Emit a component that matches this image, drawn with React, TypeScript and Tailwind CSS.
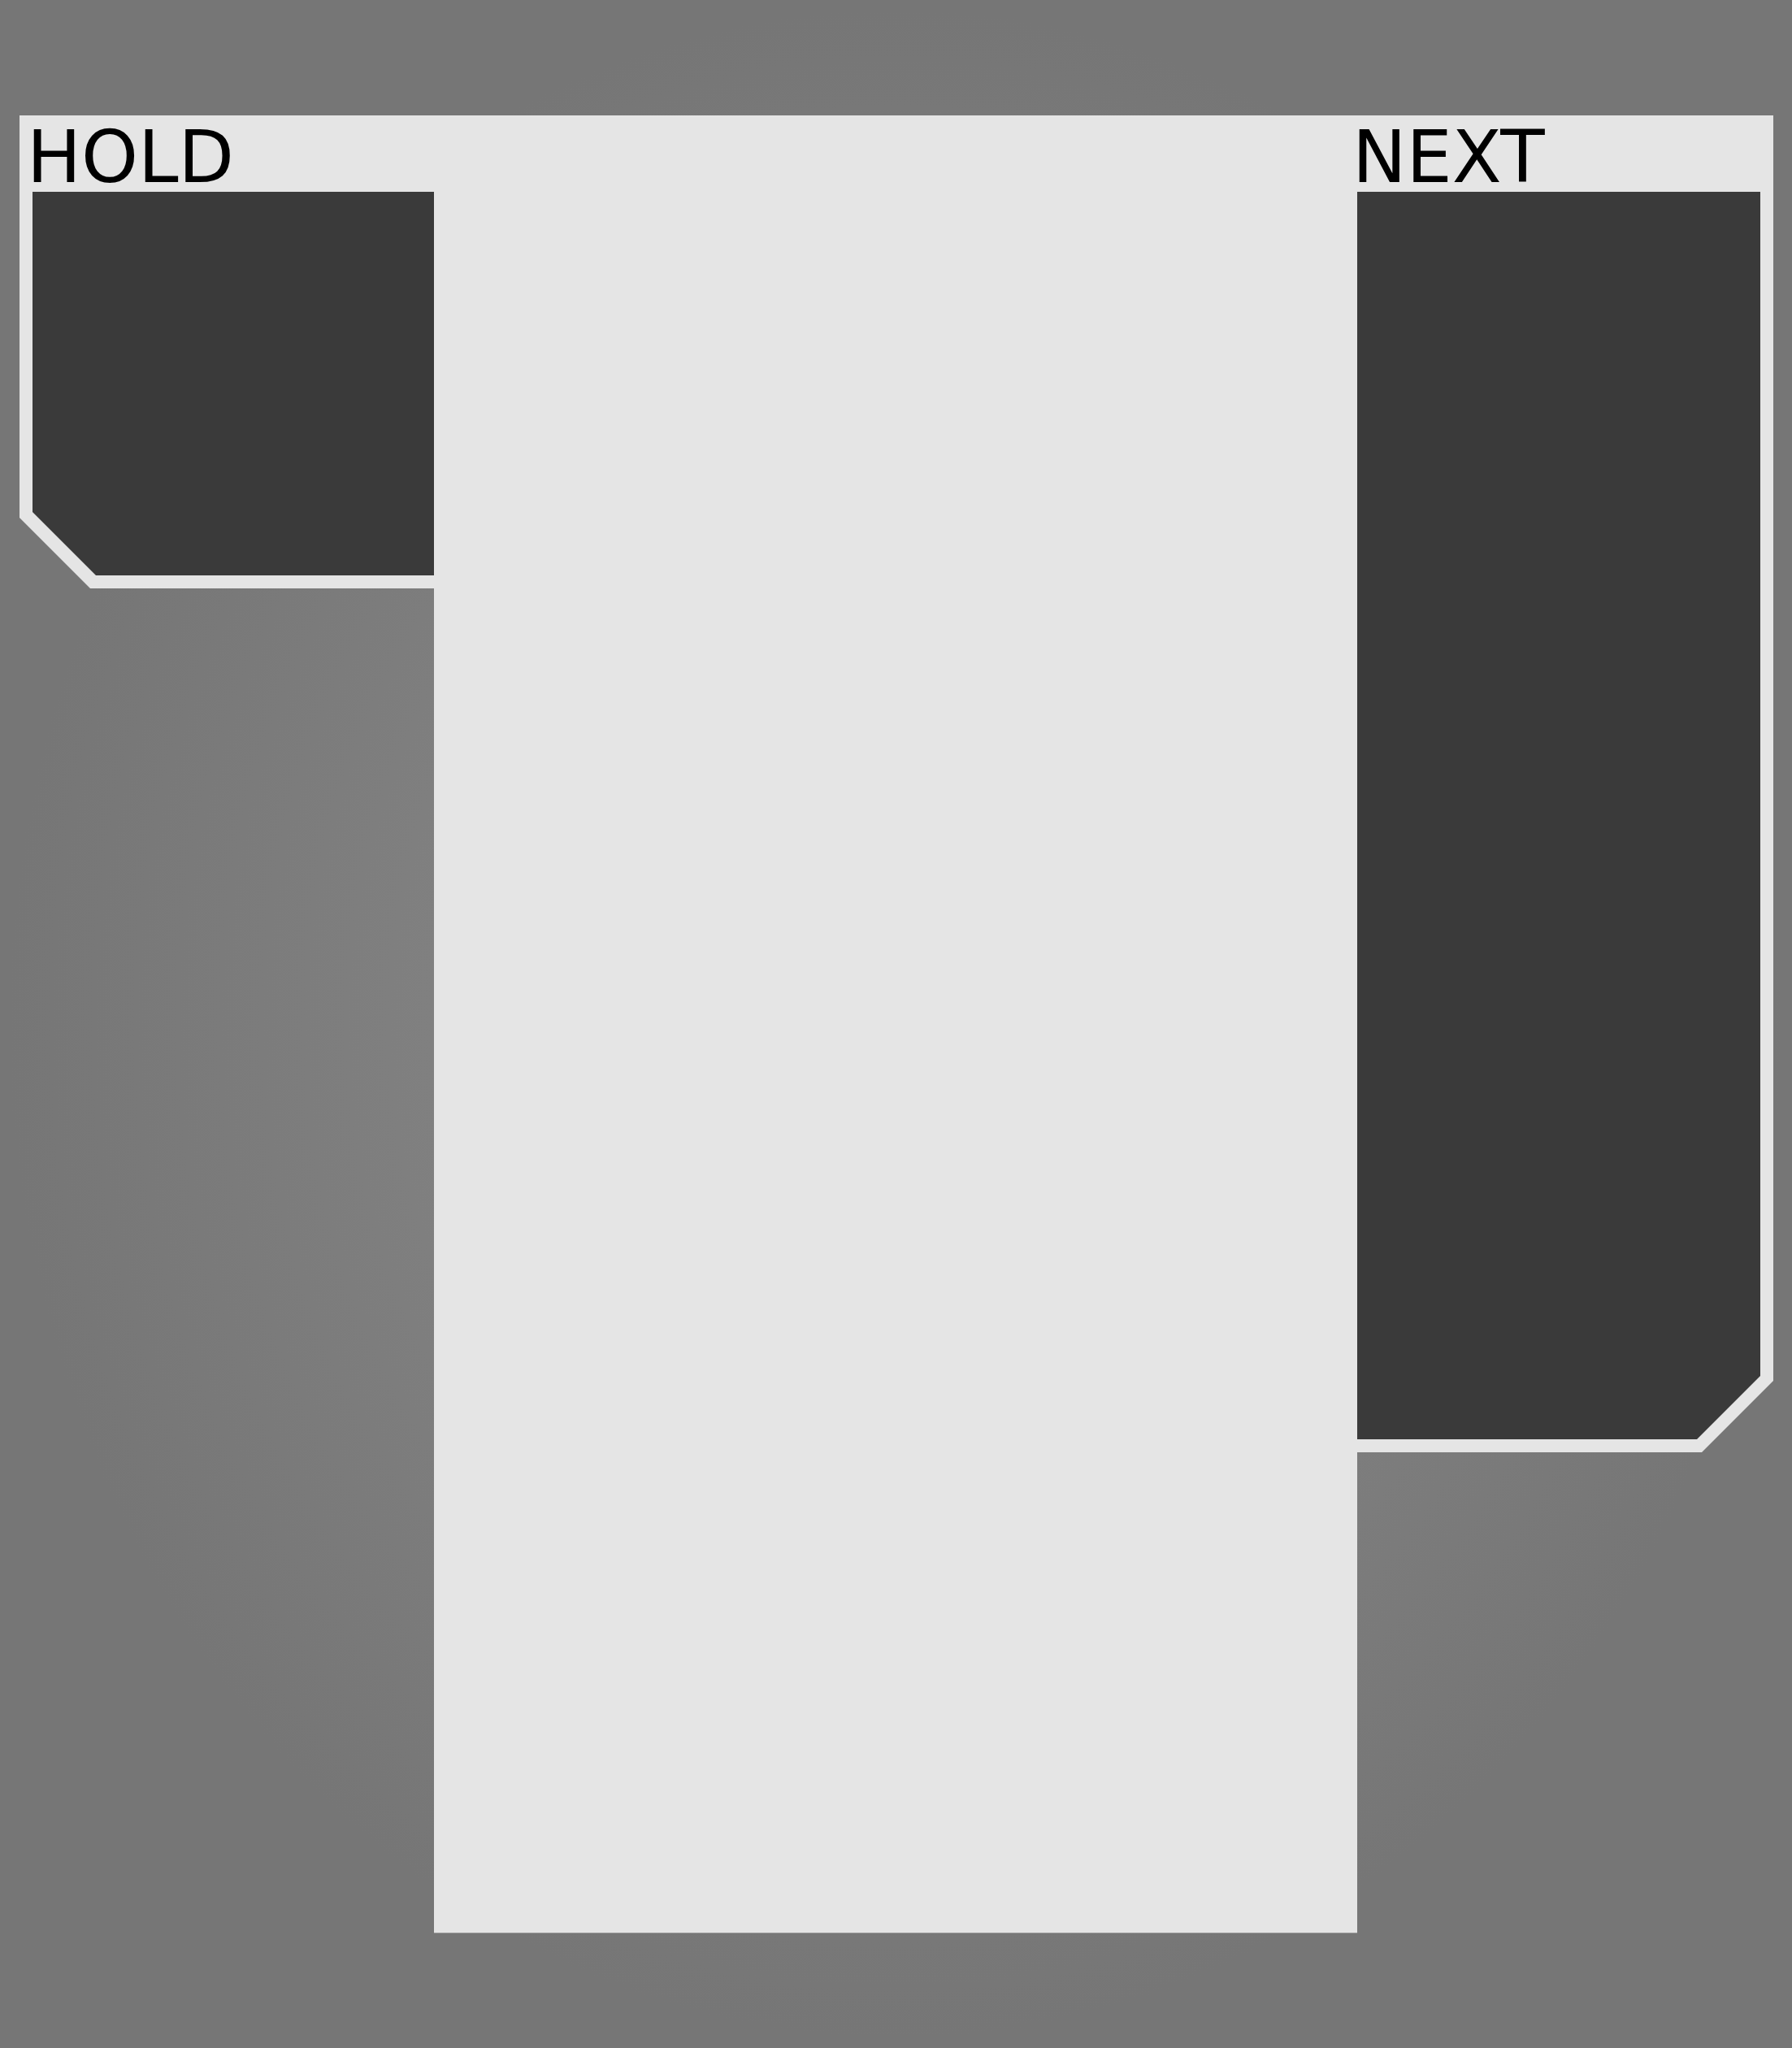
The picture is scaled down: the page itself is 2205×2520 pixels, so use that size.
export default function App() {
    return <div className="w-[2205px] h-[2520px] bg-[radial-gradient(ellipse_at_center,#8b8b8b_0%,#767676_70%)] pt-[142px] pl-[24px] font-['DejaVu_Sans',sans-serif]">
        <div className="flex items-start">
            <HoldPanel />
            <div className="w-[1136px] h-[2236px] bg-[#e5e5e5] shadow-[0_1px_0_#9a9a9a]" />
            <NextPanel />
        </div>
    </div>
}

function HoldPanel() {
    return <div className="w-[510px] flex flex-col bg-[#e5e5e5] [clip-path:polygon(0_0,100%_0,100%_100%,87px_100%,0_calc(100%-87px))]">
        <div className="h-[94px] pl-[9px] text-[89px] leading-[102px] text-black">HOLD</div>
        <div className="ml-[16px] mb-[16px] h-[472px] bg-[#3a3a3a] [clip-path:polygon(0_0,100%_0,100%_100%,78px_100%,0_calc(100%-78px))]" />
    </div>
}

function NextPanel() {
    return <div className="w-[512px] flex flex-col bg-[#e5e5e5] [clip-path:polygon(0_0,100%_0,100%_calc(100%-88px),calc(100%-88px)_100%,0_100%)]">
        <div className="h-[94px] -ml-[6px] text-[89px] leading-[102px] text-black whitespace-nowrap">NEXT</div>
        <div className="mr-[16px] mb-[16px] h-[1535px] bg-[#3a3a3a] [clip-path:polygon(0_0,100%_0,100%_calc(100%-78px),calc(100%-78px)_100%,0_100%)]" />
    </div>
}
